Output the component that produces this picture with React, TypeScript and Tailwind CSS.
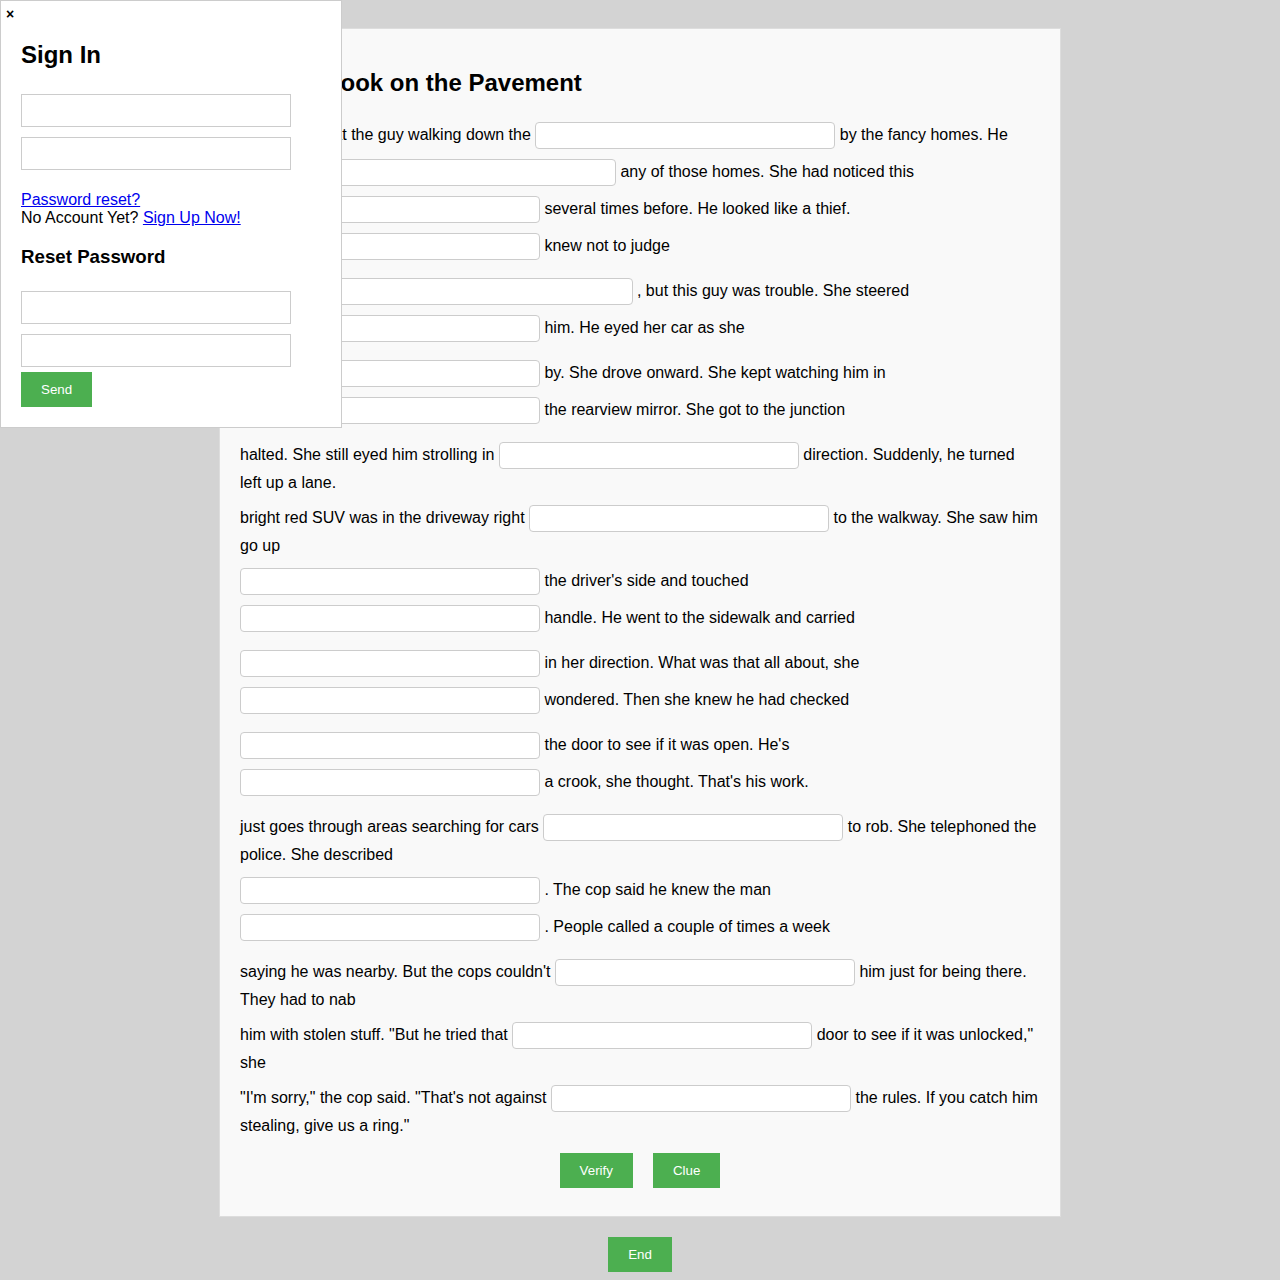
import { FC } from 'react';

type Row = { before: string; after: string; mt: string };

const rows: Row[] = [
    { before: 'Maria stared at the guy walking down the', after: 'by the fancy homes. He', mt: 'mt-0' },
    { before: "didn't own", after: 'any of those homes. She had noticed this', mt: 'mt-[9px]' },
    { before: '', after: 'several times before. He looked like a thief.', mt: 'mt-[9px]' },
    { before: '', after: 'knew not to judge', mt: 'mt-[9px]' },
    { before: 'each person', after: ', but this guy was trouble. She steered', mt: 'mt-[17px]' },
    { before: '', after: 'him. He eyed her car as she', mt: 'mt-[9px]' },
    { before: '', after: 'by. She drove onward. She kept watching him in', mt: 'mt-[17px]' },
    { before: '', after: 'the rearview mirror. She got to the junction', mt: 'mt-[9px]' },
    { before: 'halted. She still eyed him strolling in', after: 'direction. Suddenly, he turned left up a lane.', mt: 'mt-[17px]' },
    { before: 'bright red SUV was in the driveway right', after: 'to the walkway. She saw him go up', mt: 'mt-[7px]' },
    { before: '', after: "the driver's side and touched", mt: 'mt-[7px]' },
    { before: '', after: 'handle. He went to the sidewalk and carried', mt: 'mt-[9px]' },
    { before: '', after: 'in her direction. What was that all about, she', mt: 'mt-[17px]' },
    { before: '', after: 'wondered. Then she knew he had checked', mt: 'mt-[9px]' },
    { before: '', after: "the door to see if it was open. He's", mt: 'mt-[17px]' },
    { before: '', after: "a crook, she thought. That's his work.", mt: 'mt-[9px]' },
    { before: 'just goes through areas searching for cars', after: 'to rob. She telephoned the police. She described', mt: 'mt-[17px]' },
    { before: '', after: '. The cop said he knew the man', mt: 'mt-[7px]' },
    { before: '', after: '. People called a couple of times a week', mt: 'mt-[9px]' },
    { before: "saying he was nearby. But the cops couldn't", after: 'him just for being there. They had to nab', mt: 'mt-[17px]' },
    { before: 'him with stolen stuff. "But he tried that', after: 'door to see if it was unlocked," she', mt: 'mt-[7px]' },
    { before: '"I\'m sorry," the cop said. "That\'s not against', after: 'the rules. If you catch him stealing, give us a ring."', mt: 'mt-[7px]' },
];

const GreenButton: FC<{ label: string }> = ({ label }) => (
    <button className="bg-[#4caf50] text-white text-[13.33px] leading-[15px] px-5 py-[10px] cursor-pointer">
        {label}
    </button>
);

const SignInBox: FC = () => {
    return (
        <div className="absolute left-0 top-0 w-[342px] bg-white border border-[#cccccc] p-5">
            <button className="absolute left-[5px] top-[5px] text-[14px] leading-[16px] font-bold">×</button>
            <h2 className="mt-5 text-[24px] leading-[28px] font-bold">Sign In</h2>
            <input className="block mt-[25px] w-[270px] h-[33px] border border-[#cccccc] bg-white" />
            <input className="block mt-[10px] w-[270px] h-[33px] border border-[#cccccc] bg-white" />
            <div className="mt-[21px] text-[16px] leading-[18px]">
                <a href="#" className="text-[#0000ee] underline">
                    Password reset?
                </a>
                <br />
                No Account Yet?{' '}
                <a href="#" className="text-[#0000ee] underline">
                    Sign Up Now!
                </a>
            </div>
            <h3 className="mt-[19px] text-[18.72px] leading-[22px] font-bold">Reset Password</h3>
            <input className="block mt-[23px] w-[270px] h-[33px] border border-[#cccccc] bg-white" />
            <input className="block mt-[10px] w-[270px] h-[33px] border border-[#cccccc] bg-white" />
            <div className="mt-[5px]">
                <GreenButton label="Send" />
            </div>
        </div>
    );
};

export default function App() {
    return (
        <div className="relative min-h-[1280px] bg-[#d3d3d3] pt-7 pb-2 font-['Liberation_Sans',Arial,sans-serif] text-black">
            <div className="mx-auto w-[842px] bg-[#f9f9f9] border border-[#dddddd] px-5 pt-5 pb-7">
                <h2 className="mt-5 text-[24px] leading-[28px] font-bold">A Shy Crook on the Pavement</h2>
                <div className="mt-6 text-[16px] leading-[28px]">
                    {rows.map((row, i) => (
                        <div key={i} className={row.mt}>
                            {row.before && <span>{row.before} </span>}
                            <input className="inline-block align-middle -my-px w-[300px] h-[27px] rounded-[4px] border border-[#cccccc] bg-white px-[5px] text-[13.33px]" />
                            <span> {row.after}</span>
                        </div>
                    ))}
                </div>
                <div className="mt-[13px] flex justify-center gap-5">
                    <GreenButton label="Verify" />
                    <GreenButton label="Clue" />
                </div>
            </div>
            <div className="mt-5 flex justify-center">
                <GreenButton label="End" />
            </div>
            <SignInBox />
        </div>
    );
}
